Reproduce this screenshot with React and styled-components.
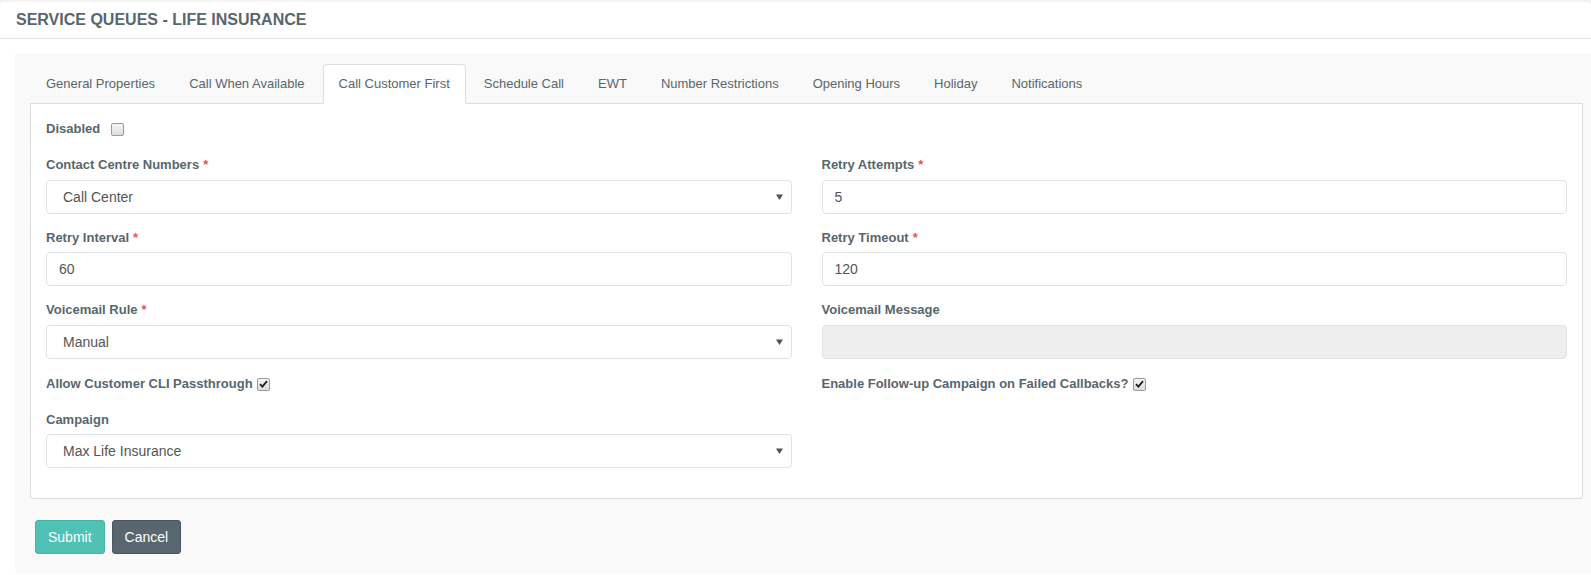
import React from "react";
import styled, { createGlobalStyle } from "styled-components";

const GlobalStyle = createGlobalStyle`
  html, body { margin: 0; padding: 0; }
  body {
    background: #f3f3f3;
    font-family: "Liberation Sans", Arial, Helvetica, sans-serif;
    color: #58666e;
    overflow: hidden;
  }
  * { box-sizing: border-box; }
`;

const Card = styled.div`
  margin-top: 2px;
  background: #fff;
  border-radius: 4px 4px 0 0;
  min-height: 573px;
`;

const CardHeader = styled.div`
  height: 37px;
  display: flex;
  align-items: center;
  padding: 0 16px;
  border-bottom: 1px solid #e4e4e4;
`;

const Title = styled.h1`
  margin: 0;
  font-size: 16px;
  font-weight: bold;
  color: #58666e;
`;

const CardBody = styled.div`
  padding: 14px 0 0 15px;
`;

const Panel = styled.div`
  background: #f9f9f9;
  padding: 11px 8px 19px 15px;
  border-radius: 0 0 0 4px;
`;

const Tabs = styled.ul`
  display: flex;
  list-style: none;
  margin: 0;
  padding: 0;
  border-bottom: 1px solid #ddd;
`;

const Tab = styled.li`
  margin: 0 2px -1px 0;
  padding: 10px 15px;
  font-size: 13px;
  line-height: 18px;
  color: #58666e;
  border: 1px solid ${(p) => (p.$active ? "#ddd" : "transparent")};
  border-bottom-color: transparent;
  background: ${(p) => (p.$active ? "#fff" : "transparent")};
  border-radius: 4px 4px 0 0;
  cursor: pointer;
  white-space: nowrap;
`;

const TabContent = styled.div`
  background: #fff;
  border: 1px solid #ddd;
  border-top: 0;
  border-radius: 0 0 4px 4px;
  padding: 15px;
`;

const FormGrid = styled.div`
  display: grid;
  grid-template-columns: 1fr 1fr;
  column-gap: 30px;
`;

const FormGroup = styled.div`
  margin-bottom: 15px;
`;

const Label = styled.label`
  display: block;
  font-size: 13px;
  font-weight: bold;
  line-height: 18.57px;
  margin-bottom: 5px;
  color: #58666e;
`;

const Req = styled.span`
  color: #f05050;
  margin-left: 4px;
`;

const CheckRow = styled.div`
  display: flex;
  align-items: center;
  height: 19px;
  margin-bottom: 18px;
  font-size: 13px;
  font-weight: bold;
  color: #58666e;
  grid-column: ${(p) => (p.$full ? "1 / -1" : "auto")};
`;

const Check = styled.span`
  display: inline-flex;
  align-items: center;
  justify-content: center;
  width: 13px;
  height: 13px;
  margin-left: ${(p) => p.$gap}px;
  margin-top: 2px;
  border: 1px solid #9a9a9a;
  border-radius: 2px;
  background: linear-gradient(#f6f6f6, #dcdcdc);
`;

const Input = styled.input`
  display: block;
  width: 100%;
  height: 34px;
  padding: 6px 12px;
  font-family: inherit;
  font-size: 14px;
  color: #555;
  background: ${(p) => (p.disabled ? "#eeeeee" : "#fff")};
  border: 1px solid #dfe3e6;
  border-radius: 4px;
  outline: none;
`;

const SelectWrap = styled.div`
  position: relative;
`;

const Select = styled.select`
  display: block;
  width: 100%;
  height: 34px;
  padding: 6px 16px;
  font-family: inherit;
  font-size: 14px;
  color: #555;
  background: #fff;
  border: 1px solid #dfe3e6;
  border-radius: 4px;
  appearance: none;
  -webkit-appearance: none;
  outline: none;
`;

const Arrow = styled.svg`
  position: absolute;
  right: 9px;
  top: 14px;
  width: 7px;
  height: 6px;
  pointer-events: none;
`;

const Actions = styled.div`
  display: flex;
  gap: 7px;
  margin-top: 21px;
  padding-left: 5px;
`;

const Button = styled.button`
  height: 34px;
  padding: 6px 12px;
  font-family: inherit;
  font-size: 14px;
  color: #fff;
  border-radius: 3px;
  border: 1px solid ${(p) => (p.$variant === "primary" ? "#46b3a7" : "#4b575f")};
  background: ${(p) => (p.$variant === "primary" ? "#4fc1b5" : "#58666e")};
  cursor: pointer;
`;

const CheckBox = ({ checked, gap }) => (
  <Check $gap={gap} role="checkbox" aria-checked={checked}>
    {checked && (
      <svg width="9" height="8" viewBox="0 0 9 8">
        <path d="M1 4.2 L3.4 6.6 L8 1.2" fill="none" stroke="#222" strokeWidth="1.9" />
      </svg>
    )}
  </Check>
);

const SelectField = ({ value }) => (
  <SelectWrap>
    <Select defaultValue={value}>
      <option>{value}</option>
    </Select>
    <Arrow viewBox="0 0 7 6">
      <path d="M0 0.5 L7 0.5 L3.5 6 Z" fill="#4a555c" />
    </Arrow>
  </SelectWrap>
);

const Field = ({ label, required, children }) => (
  <FormGroup>
    <Label>
      {label}
      {required && <Req>*</Req>}
    </Label>
    {children}
  </FormGroup>
);

const tabs = [
  "General Properties",
  "Call When Available",
  "Call Customer First",
  "Schedule Call",
  "EWT",
  "Number Restrictions",
  "Opening Hours",
  "Holiday",
  "Notifications",
];

export default function App() {
  return (
    <>
      <GlobalStyle />
      <Card>
        <CardHeader>
          <Title>SERVICE QUEUES - LIFE INSURANCE</Title>
        </CardHeader>
        <CardBody>
          <Panel>
            <Tabs>
              {tabs.map((t) => (
                <Tab key={t} $active={t === "Call Customer First"}>
                  {t}
                </Tab>
              ))}
            </Tabs>
            <TabContent>
              <FormGrid>
                <CheckRow $full>
                  Disabled
                  <CheckBox gap={11} checked={false} />
                </CheckRow>
                <Field label="Contact Centre Numbers" required>
                  <SelectField value="Call Center" />
                </Field>
                <Field label="Retry Attempts" required>
                  <Input defaultValue="5" />
                </Field>
                <Field label="Retry Interval" required>
                  <Input defaultValue="60" />
                </Field>
                <Field label="Retry Timeout" required>
                  <Input defaultValue="120" />
                </Field>
                <Field label="Voicemail Rule" required>
                  <SelectField value="Manual" />
                </Field>
                <Field label="Voicemail Message">
                  <Input disabled defaultValue="" />
                </Field>
                <CheckRow>
                  Allow Customer CLI Passthrough
                  <CheckBox gap={4} checked />
                </CheckRow>
                <CheckRow>
                  Enable Follow-up Campaign on Failed Callbacks?
                  <CheckBox gap={4} checked />
                </CheckRow>
                <Field label="Campaign">
                  <SelectField value="Max Life Insurance" />
                </Field>
              </FormGrid>
            </TabContent>
            <Actions>
              <Button $variant="primary">Submit</Button>
              <Button>Cancel</Button>
            </Actions>
          </Panel>
        </CardBody>
      </Card>
    </>
  );
}
